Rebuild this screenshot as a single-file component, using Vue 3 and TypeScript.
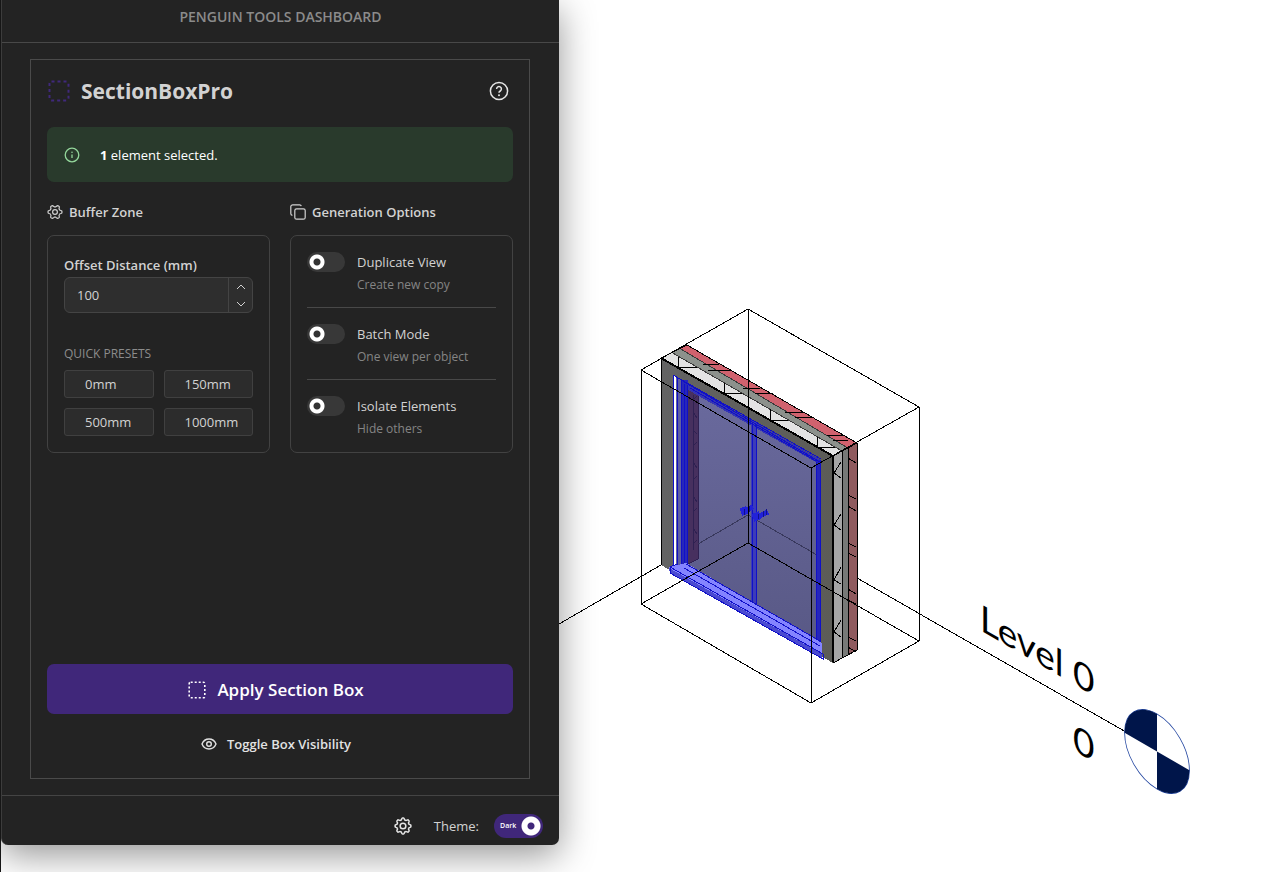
<script setup lang="ts">
import { reactive, ref } from 'vue'

interface Option {
  id: string
  title: string
  note: string
  on: boolean
}

const offset = ref(100)
const presets = [0, 150, 500, 1000]
const dark = ref(true)
const options = reactive<Option[]>([
  { id: 'duplicate', title: 'Duplicate View', note: 'Create new copy', on: false },
  { id: 'batch', title: 'Batch Mode', note: 'One view per object', on: false },
  { id: 'isolate', title: 'Isolate Elements', note: 'Hide others', on: false },
])

// Closed outline of a gear with rounded teeth, centred in a 24-unit box.
function gear(teeth: number, radius: number, depth: number): string {
  const points: string[] = []
  const steps = teeth * 16
  for (let i = 0; i < steps; i++) {
    const a = (i / steps) * Math.PI * 2
    const wave = Math.max(-0.7, Math.min(0.7, Math.cos(teeth * a)))
    const r = radius + depth * wave
    points.push(`${(12 + r * Math.cos(a)).toFixed(2)} ${(12 + r * Math.sin(a)).toFixed(2)}`)
  }
  return `M${points.join('L')}Z`
}
const gearSix = gear(6, 9, 2)
const gearEight = gear(8, 9.4, 1.6)
</script>

<template>
  <div class="workspace">
    <section class="panel">
      <header class="bar">PENGUIN TOOLS DASHBOARD</header>

      <main class="body">
        <div class="card">
          <div class="title-row">
            <svg class="logo" viewBox="0 0 22 22" aria-hidden="true">
              <rect x="1.5" y="1.5" width="19" height="19" rx="2" />
            </svg>
            <h1>SectionBoxPro</h1>
            <button class="icon-button help" type="button" aria-label="Help">
              <svg viewBox="0 0 20 20" aria-hidden="true">
                <circle cx="10" cy="10" r="8.6" />
                <path d="M7.6 8a2.4 2.4 0 1 1 3.7 2c-.8.5-1.3.9-1.3 1.8" />
                <circle class="dot" cx="10" cy="14.2" r="1" />
              </svg>
            </button>
          </div>

          <div class="notice" role="status">
            <svg viewBox="0 0 16 16" aria-hidden="true">
              <circle cx="8" cy="8" r="6.8" />
              <path d="M8 7.4v3.6" />
              <circle class="dot" cx="8" cy="5.3" r=".8" />
            </svg>
            <span><b>1</b> element selected.</span>
          </div>

          <div class="columns">
            <section class="column">
              <h2>
                <svg viewBox="0 0 24 24" aria-hidden="true">
                  <path :d="gearSix" />
                  <circle cx="12" cy="12" r="3.6" />
                </svg>
                Buffer Zone
              </h2>
              <div class="box">
                <label class="field-label" for="offset">Offset Distance (mm)</label>
                <div class="number">
                  <input id="offset" v-model="offset" type="number" />
                  <div class="steps">
                    <button type="button" aria-label="Increase" @click="offset++">
                      <svg viewBox="0 0 10 6" aria-hidden="true"><path d="M1 5l4-4 4 4" /></svg>
                    </button>
                    <button type="button" aria-label="Decrease" @click="offset--">
                      <svg viewBox="0 0 10 6" aria-hidden="true"><path d="M1 1l4 4 4-4" /></svg>
                    </button>
                  </div>
                </div>
                <p class="caption">QUICK PRESETS</p>
                <div class="presets">
                  <button v-for="p in presets" :key="p" type="button" @click="offset = p">{{ p }}mm</button>
                </div>
              </div>
            </section>

            <section class="column">
              <h2>
                <svg class="copy" viewBox="0 0 16 16" aria-hidden="true">
                  <rect x="4.8" y="4.8" width="10.4" height="10.4" rx="1.8" />
                  <path d="M2.4 11.4A1.8 1.8 0 0 1 .8 9.6V2.8a2 2 0 0 1 2-2h6.8a1.8 1.8 0 0 1 1.7 1.4" />
                </svg>
                Generation Options
              </h2>
              <div class="box options">
                <div v-for="o in options" :key="o.id" class="option">
                  <input :id="o.id" v-model="o.on" class="switch" type="checkbox" role="switch" />
                  <label :for="o.id">
                    <span class="name">{{ o.title }}</span>
                    <span class="note">{{ o.note }}</span>
                  </label>
                </div>
              </div>
            </section>
          </div>

          <button class="apply" type="button">
            <svg viewBox="0 0 18 18" aria-hidden="true">
              <rect x="1.2" y="1.2" width="15.6" height="15.6" rx="1.5" />
            </svg>
            Apply Section Box
          </button>
          <button class="toggle" type="button">
            <svg viewBox="0 0 16 12" aria-hidden="true">
              <path d="M1 6C2.400 2.600 5 1 8 1s5.600 1.600 7 5c-1.400 3.400-4 5-7 5S2.400 9.400 1 6z" />
              <circle cx="8" cy="6" r="2.300" />
            </svg>
            Toggle Box Visibility
          </button>
        </div>
      </main>

      <footer class="foot">
        <button class="icon-button" type="button" aria-label="Settings">
          <svg viewBox="0 0 24 24" aria-hidden="true">
            <path :d="gearEight" />
            <circle cx="12" cy="12" r="3.8" />
          </svg>
        </button>
        <label class="theme-label" for="theme">Theme:</label>
        <span class="theme">
          <input id="theme" v-model="dark" type="checkbox" role="switch" />
          <span class="theme-text">Dark</span>
        </span>
      </footer>
    </section>

    <svg class="view" viewBox="559 0 702 872" preserveAspectRatio="xMinYMin meet" role="img" aria-label="3D view">
      <defs>
        <linearGradient id="glass" x1="0" y1="0" x2="0" y2="1">
          <stop offset="0" stop-color="#6a6a9e" />
          <stop offset="1" stop-color="#595986" />
        </linearGradient>
        <linearGradient id="face" x1="0" y1="0" x2="1" y2="0">
          <stop offset="0" stop-color="#636363" />
          <stop offset="1" stop-color="#5c5c57" />
        </linearGradient>
      </defs>

      <g shape-rendering="crispEdges">
        <!-- wall layers, top -->
        <path fill="#e3e3e3" d="M661 358L671 352L842 451L833 456Z" />
        <path fill="#8c918c" d="M671 352L679 348L848 448L842 451Z" />
        <path fill="#d0626e" d="M679 348L687 345L857 443L848 448Z" />
        <!-- wall layers, end -->
        <path fill="#a6a6a6" d="M833 456L842 451V658L833 663Z" />
        <path fill="#777977" d="M842 451L848 448V655L842 658Z" />
        <path fill="#8f5a5e" d="M848 448L857 443V650L848 655Z" />
        <path fill="url(#face)" d="M661 358L833 456V663L661 565Z" />

        <g class="seam">
          <path d="M671 352L842 451M679 348L848 448" />
        </g>
        <g class="ink">
          <path d="M661 565V358L833 456V663L857 650V443L687 345L661 358M842 451V658M848 448V655M833 456L857 443" />
          <path d="M678 357V367H697M724 383V393H742M770 409V420H788M817 437V447H835" />
          <path d="M703 364H719M708 370H730M743 388H760M755 393H773M785 412H803M795 417H812M827 435H843M833 440H848" />
          <path d="M841 462L834 473L841 478M841 514L834 525L841 530M841 567L834 580L841 584M841 620L834 632L841 637" />
          <path d="M848 458L856 463M848 495L856 499M848 506L856 511M848 543L856 547M848 553L856 557M848 589L856 594M848 600L856 604M848 637L856 641M848 647L856 652" />
          <path stroke-width="2" d="M661 358L833 456V662" />
        </g>

        <!-- door -->
        <path fill="url(#glass)" d="M688 385L817 459V641L688 566Z" />
        <path fill="#47305f" d="M688 386L698 392V559L688 564Z" />
        <path stroke="#2f2152" fill="none" d="M693 400L697 396M693 412L697 418M693 430L697 434M693 446L697 442M693 462L697 468M693 480L697 476M693 496L697 502M693 512L697 508M693 528L697 534M693 544L697 540M698 392V559L688 564M693 395V550" />
        <path class="far" d="M698 544L748 515L817 555" />
        <path fill="#6060a0" d="M673 375L681 380V570L673 566Z" />
        <path fill="#ffffff" d="M674 376H676V566H674Z" />
        <path fill="#3434b4" d="M681 380L821 460V465L681 386Z" />
        <path fill="#2727ba" d="M681 380H688V568H681Z" />
        <path fill="#2525bd" d="M816 460H821V648H816Z" />
        <path fill="#3c3cb8" d="M751 422H757V605H751Z" />
        <g class="blue">
          <path d="M673 566V375L821 459M677 566V378M681 566V380L820 462M684 570V384M687 568V385M690 388L816 461" />
          <path d="M752 422V605M756 424V606M816 462V645M820 460V649" />
        </g>
        <path fill="#8484ff" d="M669 567L686 563L822 643V658L670 573Z" />
        <path fill="#4a4ad0" d="M669 568L822 654V659L670 573Z" />
        <g class="blue">
          <path d="M670 573V567L677 564M670 567L823 654V659L670 573M686 564L820 641M684 568L820 646" />
        </g>
        <path stroke="#2222d8" stroke-width="5" fill="none" d="M741 512L753 507M755 518L768 512" />
        <path stroke="#2222d8" stroke-width="8" fill="none" d="M741 512L747 510M753 518L760 515" />
        <path stroke="#10108c" stroke-width="1" fill="none" d="M744 515V509M749 512V506M758 519V514M763 517V511M766 515V509" />

        <!-- section box and level line -->
        <g class="ink">
          <path d="M748 309L641 370V604L811 703L919 641V407L748 309V543L641 604M748 543L919 641M641 370L811 468V703M811 468L919 407" />
          <path d="M559 624L661 565M857 578L1126 732" />
        </g>
      </g>

      <text class="level" transform="translate(980 630) skewY(30)">Level 0</text>
      <text class="level" transform="translate(1073 750) skewY(30)">0</text>

      <g transform="matrix(.866 .5 0 1 1157 751.500)">
        <circle r="37.400" fill="#fff" stroke="#2346a0" />
        <path fill="#00154a" d="M0 0H-37.400A37.400 37.400 0 0 1 0 -37.400ZM0 0H37.400A37.400 37.400 0 0 1 0 37.400Z" />
      </g>
    </svg>
  </div>
</template>

<style>
body {
  margin: 0;
  background: #fff;
}
</style>

<style scoped>
.workspace {
  box-sizing: border-box;
  display: grid;
  grid-template-columns: minmax(460px, 558fr) 702fr;
  min-height: 100vh;
  overflow: hidden;
  border-left: 1px solid #161616;
  background: #fff;
  color: #d2d2d2;
  font: 13px/20px "Open Sans", "Noto Sans", sans-serif;
}
.workspace *,
.workspace *::before {
  box-sizing: border-box;
}
button,
input {
  font: inherit;
  color: inherit;
  margin: 0;
}
button {
  cursor: pointer;
}
svg {
  flex: none;
  fill: none;
  stroke: currentColor;
}
.dot {
  fill: currentColor;
  stroke: none;
}

.panel {
  position: relative;
  z-index: 1;
  display: flex;
  flex-direction: column;
  margin-bottom: 27px;
  border-left: 1px solid #3c3c3c;
  border-radius: 0 0 7px 7px;
  background: #232323;
  box-shadow: 0 10px 36px rgba(0, 0, 0, 0.42);
}
.bar {
  height: 43px;
  padding-top: 7px;
  border-bottom: 1px solid #484848;
  color: #8b8b8b;
  font-size: 14px;
  font-weight: 600;
  text-align: center;
}
.body {
  flex: 1;
  display: flex;
  padding: 16px 29px 16px 28px;
}
.card {
  flex: 1;
  display: flex;
  flex-direction: column;
  padding: 16px;
  border: 1px solid #4a4a4a;
}
.title-row {
  display: flex;
  align-items: center;
  height: 30px;
  margin-bottom: 21px;
}
.logo {
  width: 22px;
  height: 22px;
  margin-left: 1px;
  stroke: #40297c;
  stroke-width: 2;
  stroke-dasharray: 3 3;
}
h1 {
  flex: 1;
  margin: 0 0 0 11px;
  font-size: 21px;
  line-height: 30px;
  font-weight: 700;
}
.icon-button {
  display: flex;
  padding: 0;
  border: 0;
  background: none;
  color: #e6e6e6;
}
.icon-button svg {
  width: 18px;
  height: 18px;
  stroke-width: 2;
}
.help {
  margin-right: 4px;
}
.help svg {
  width: 20px;
  height: 20px;
  stroke-width: 1.5;
}
.notice {
  display: flex;
  align-items: center;
  gap: 20px;
  height: 55px;
  padding: 0 17px;
  border-radius: 7px;
  background: #293a2c;
  color: #fff;
}
.notice svg {
  width: 16px;
  height: 16px;
  color: #93d69b;
  stroke-width: 1.3;
}
.columns {
  display: grid;
  grid-template-columns: repeat(2, minmax(0, 1fr));
  gap: 20px;
  margin-top: 20px;
}
.column {
  display: flex;
  flex-direction: column;
}
h2 {
  display: flex;
  align-items: center;
  gap: 6px;
  margin: 0 0 13px;
  font-size: 13px;
  line-height: 20px;
  font-weight: 600;
}
h2 svg {
  width: 16px;
  height: 16px;
  stroke-width: 1.8;
}
h2 .copy {
  stroke-width: 1.2;
}
.box {
  flex: 1;
  padding: 16px;
  border: 1px solid #424242;
  border-radius: 7px;
}
.options {
  padding-bottom: 12px;
}
.field-label {
  display: block;
  padding-top: 1px;
  line-height: 24px;
  font-weight: 600;
}
.number {
  display: flex;
  height: 36px;
  border: 1px solid #444;
  border-radius: 6px;
  background: #2e2e2e;
}
.number input {
  flex: 1;
  min-width: 0;
  padding: 0 12px;
  border: 0;
  outline: 0;
  background: none;
  appearance: textfield;
}
.number input::-webkit-inner-spin-button {
  appearance: none;
}
.steps {
  display: grid;
  width: 24px;
  border-left: 1px solid #444;
}
.steps button {
  display: flex;
  align-items: center;
  justify-content: center;
  padding: 0;
  border: 0;
  background: none;
}
.steps svg {
  width: 10px;
  height: 6px;
}
.caption {
  margin: 31px 0 6px;
  color: #8c8c8c;
  font-size: 12px;
}
.presets {
  display: grid;
  grid-template-columns: repeat(2, minmax(0, 1fr));
  gap: 10px;
}
.presets button {
  height: 28px;
  padding: 0 0 0 20px;
  border: 1px solid #404040;
  border-radius: 3px;
  background: #2c2c2c;
  text-align: left;
}
.option {
  display: flex;
  gap: 12px;
  padding-bottom: 12px;
}
.option + .option {
  padding-top: 16px;
  border-top: 1px solid #484848;
}
.option:last-child {
  padding-bottom: 0;
}
.switch {
  appearance: none;
  width: 38px;
  height: 20px;
  border-radius: 10px;
  background: radial-gradient(circle at 10px 10px, #333 0 3px, #fff 4px 7px, transparent 8px) #383838;
}
.switch:checked {
  background: radial-gradient(circle at 28px 10px, #40277a 0 3px, #fff 4px 7px, transparent 8px) #40277a;
}
.name,
.note {
  display: block;
}
.note {
  margin-top: 3px;
  color: #858585;
  font-size: 12px;
}
.apply {
  display: flex;
  align-items: center;
  justify-content: center;
  gap: 11px;
  height: 50px;
  margin-top: auto;
  padding: 2px 8px 0 0;
  border: 0;
  border-radius: 7px;
  background: #40277a;
  color: #fff;
  font-size: 17px;
  font-weight: 600;
}
.apply svg {
  width: 18px;
  height: 18px;
  stroke-width: 1.6;
  stroke-dasharray: 2 2;
}
.toggle {
  display: flex;
  align-items: center;
  justify-content: center;
  gap: 10px;
  height: 35px;
  margin-top: 13px;
  padding: 0 8px 2px 0;
  border: 0;
  background: none;
  color: #e2e2e2;
  font-weight: 600;
}
.toggle svg {
  width: 16px;
  height: 12px;
  stroke-width: 1.4;
}
.foot {
  display: flex;
  align-items: center;
  justify-content: flex-end;
  height: 50px;
  padding: 11px 16px 0 0;
  border-top: 1px solid #444;
}
.theme-label {
  margin: 0 15px 0 22px;
}
.theme {
  position: relative;
  display: flex;
}
.theme input {
  appearance: none;
  width: 49px;
  height: 24px;
  border-radius: 12px;
  background: radial-gradient(circle at 37px 12px, #40277a 0 3px, #fff 4px 9px, transparent 10px) #40277a;
}
.theme-text {
  position: absolute;
  left: 6px;
  top: 2px;
  color: #fff;
  font-size: 7px;
  font-weight: 600;
  pointer-events: none;
}

.view {
  width: 100%;
  align-self: start;
  stroke: none;
}
.ink {
  fill: none;
  stroke: #000;
}
.seam {
  fill: none;
  stroke: #3a3a3a;
}
.blue {
  fill: none;
  stroke: #1010c8;
}
.far {
  fill: none;
  stroke: #38385c;
}
.level {
  fill: #000;
  font: 37px Lato, "Liberation Sans", sans-serif;
}
</style>
